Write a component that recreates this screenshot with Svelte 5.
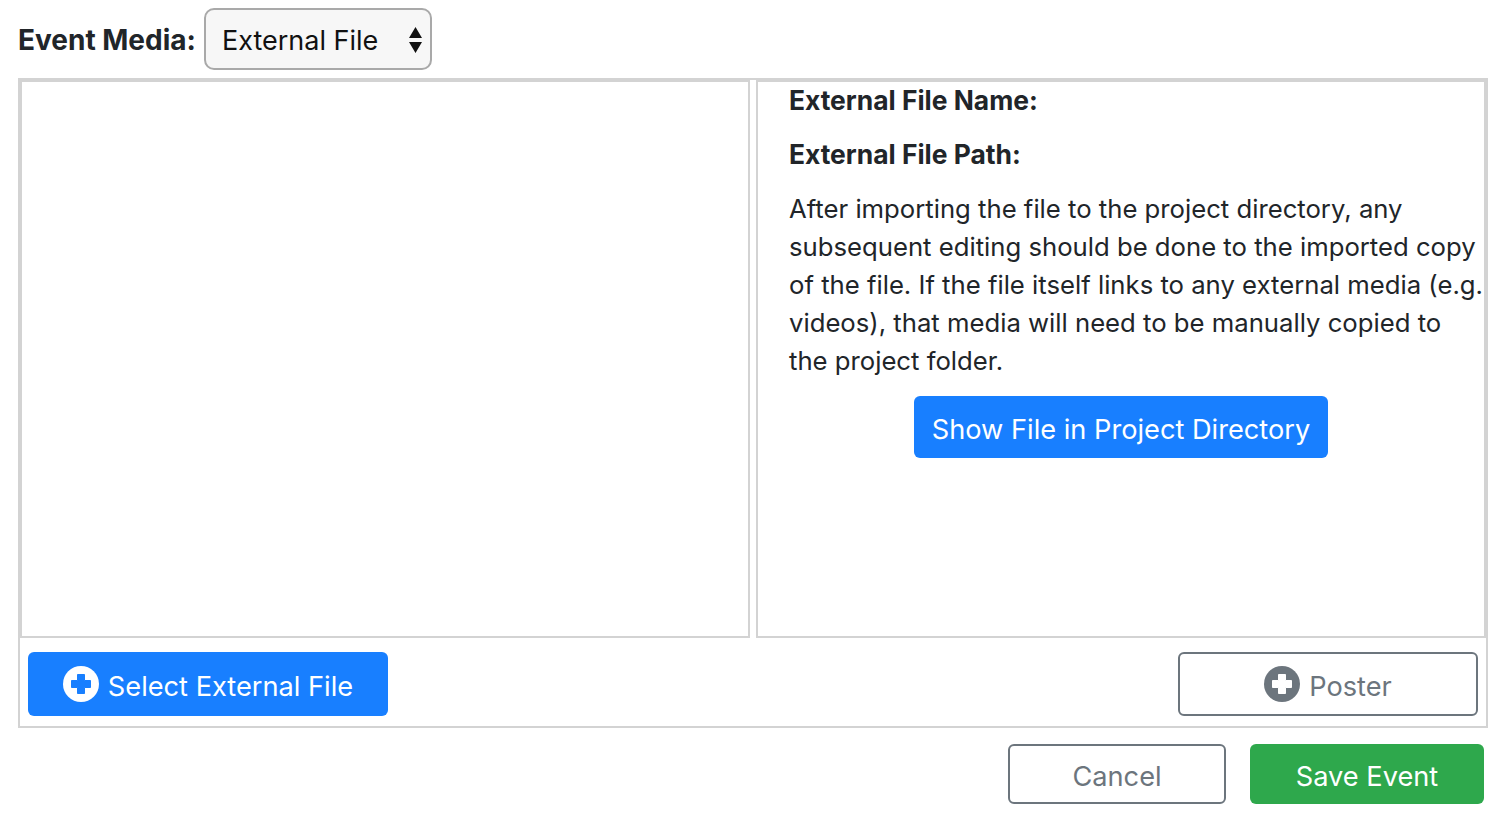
<script>
  const paragraph = "After importing the file to the project directory, any subsequent editing should be done to the imported copy of the file. If the file itself links to any external media (e.g. videos), that media will need to be manually copied to the project folder.";
</script>

{#snippet plus(fill, cross)}
  <svg class="plus" viewBox="0 0 36 36" aria-hidden="true">
    <circle cx="18" cy="18" r="18" fill={fill} />
    <path d="M14.500 8.500h7v6h6v7h-6v6h-7v-6h-6v-7h6z" fill={cross} stroke={cross} stroke-width="1" stroke-linejoin="round" />
  </svg>
{/snippet}

<div class="page">
  <div class="media-row">
    <span class="media-label">Event Media:</span>
    <div class="select">
      <span>External File</span>
      <svg class="arrows" viewBox="0 0 13 26" aria-hidden="true">
        <path d="M6.500 0L13 11H0zM6.500 26L0 15h13z" fill="#111" />
      </svg>
    </div>
  </div>

  <div class="frame">
    <div class="panes">
      <div class="pane"></div>
      <div class="pane detail">
        <p class="strong">External File Name:</p>
        <p class="strong">External File Path:</p>
        <p class="text">{paragraph}</p>
        <div class="center"><button class="btn primary show"><span>Show File in Project Directory</span></button></div>
      </div>
    </div>
    <div class="frame-actions">
      <button class="btn primary select-file">{@render plus("#fff", "#187fff")}<span>Select External File</span></button>
      <button class="btn outline poster">{@render plus("#6c757d", "#fff")}<span>Poster</span></button>
    </div>
  </div>

  <div class="footer">
    <button class="btn outline cancel"><span>Cancel</span></button>
    <button class="btn success save"><span>Save Event</span></button>
  </div>
</div>

<style>
  :global(body) {
    margin: 0;
    background: #fff;
  }
  .page {
    width: 1508px;
    height: 832px;
    box-sizing: border-box;
    padding: 8px 20px 0 18px;
    font-family: Inter, "Noto Sans", sans-serif;
    font-size: 27.2px;
    color: #212529;
    overflow: hidden;
  }
  .media-row {
    display: flex;
    align-items: center;
    height: 62px;
    gap: 8px;
  }
  .media-label {
    font-weight: 700;
    font-size: 28px;
    margin-top: 2px;
  }
  .select {
    box-sizing: border-box;
    width: 228px;
    height: 62px;
    padding: 2px 8px 0 16px;
    display: flex;
    align-items: center;
    justify-content: space-between;
    background: #f7f7f7;
    border: 2px solid #a9a9a9;
    border-radius: 10px;
    color: #111;
    font-size: 27px;
  }
  .arrows {
    width: 13px;
    height: 26px;
    margin-top: -1px;
  }
  .frame {
    box-sizing: border-box;
    width: 1470px;
    height: 650px;
    margin-top: 8px;
    border: 2px solid #d3d3d3;
  }
  .panes {
    display: grid;
    grid-template-columns: 730px 730px;
    gap: 6px;
    height: 558px;
  }
  .pane {
    box-sizing: border-box;
    border: 2px solid #d3d3d3;
    overflow: hidden;
  }
  .detail {
    padding: 0 0 0 31px;
  }
  p {
    margin: 0;
    line-height: 38px;
  }
  .strong {
    font-weight: 700;
    font-size: 26.4px;
    margin-top: -1px;
    margin-bottom: 17px;
  }
  .text {
    font-size: 25.7px;
    width: 695px;
    margin-top: 1px;
    margin-bottom: 16px;
  }
  .center {
    display: flex;
    justify-content: center;
    width: 664px;
  }
  .btn {
    box-sizing: border-box;
    display: inline-flex;
    align-items: center;
    justify-content: center;
    font: inherit;
    border-radius: 6px;
    padding: 0;
    border: 2px solid transparent;
  }
  .btn span {
    padding-top: 4px;
  }
  .primary {
    background: #187fff;
    color: #fff;
  }
  .outline {
    background: #fff;
    border-color: #6c757d;
    color: #6c757d;
  }
  .success {
    background: #2ea84c;
    color: #fff;
  }
  .show {
    width: 414px;
    height: 62px;
  }
  .frame-actions {
    display: flex;
    justify-content: space-between;
    padding: 14px 8px 0 8px;
  }
  .select-file {
    width: 360px;
    height: 64px;
  }
  .poster {
    width: 300px;
    height: 64px;
  }
  .plus {
    width: 36px;
    height: 36px;
    margin-right: 9px;
    flex: none;
  }
  .footer {
    display: flex;
    justify-content: flex-end;
    gap: 24px;
    margin-top: 16px;
    padding-right: 4px;
  }
  .cancel {
    width: 218px;
    height: 60px;
  }
  .save {
    width: 234px;
    height: 60px;
  }
</style>
